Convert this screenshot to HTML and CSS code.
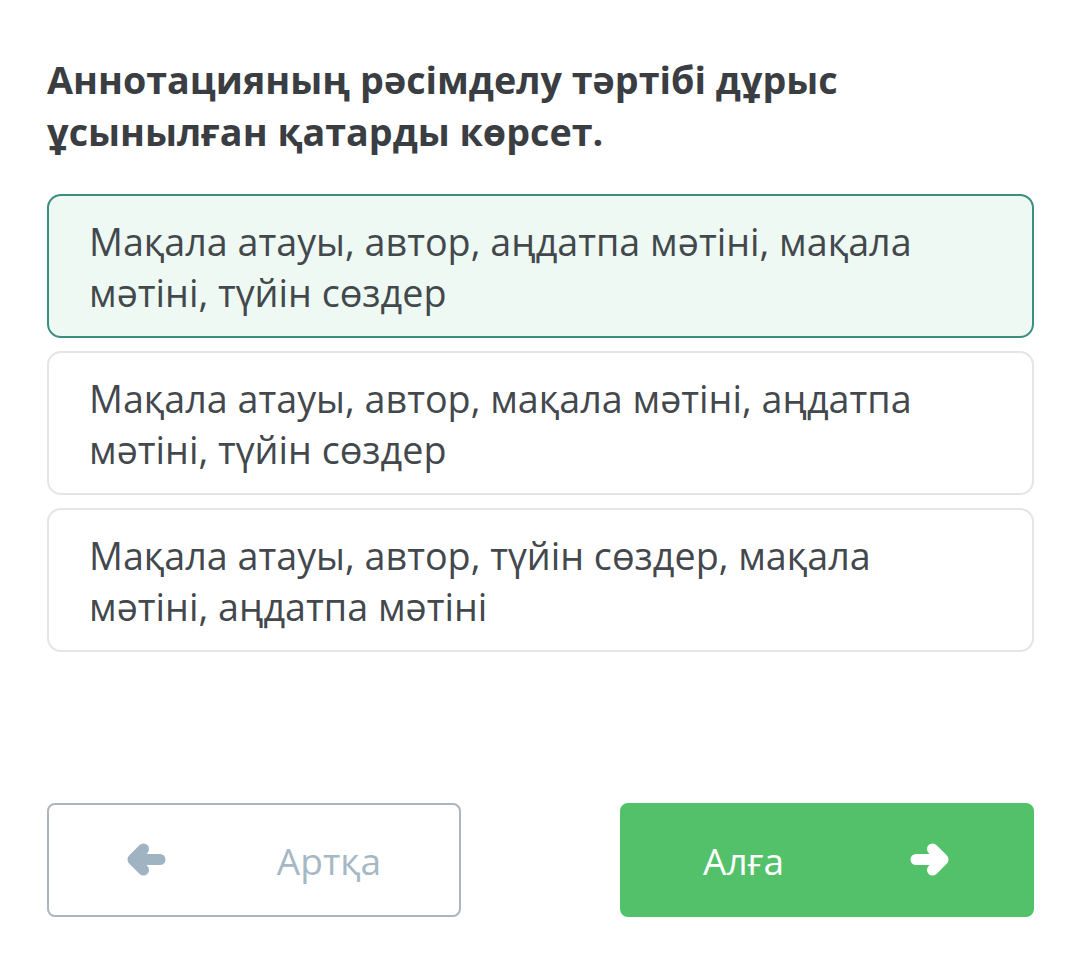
FILE: index.html
```html
<!DOCTYPE html>
<html lang="kk">
<head>
<meta charset="utf-8">
<link rel="stylesheet" href="styles.css">
</head>
<body>
<main class="quiz">
  <h1 class="question">Аннотацияның рәсімделу тәртібі дұрыс ұсынылған қатарды көрсет.</h1>
  <div class="options">
    <div class="option selected">Мақала атауы, автор, аңдатпа мәтіні, мақала мәтіні, түйін сөздер</div>
    <div class="option">Мақала атауы, автор, мақала мәтіні, аңдатпа мәтіні, түйін сөздер</div>
    <div class="option">Мақала атауы, автор, түйін сөздер, мақала мәтіні, аңдатпа мәтіні</div>
  </div>
  <div class="nav">
    <button class="btn back">
      <svg class="icon" viewBox="0 0 40 36"><path d="M34 17.5 H9 M17.5 7 L7 17.5 L17.5 28"/></svg>
      <span>Артқа</span>
    </button>
    <button class="btn next">
      <span>Алға</span>
      <svg class="icon" viewBox="0 0 40 36"><path d="M6 17.5 H31 M22.5 7 L33 17.5 L22.5 28"/></svg>
    </button>
  </div>
</main>
</body>
</html>
```

FILE: styles.css
```css
html, body {
  margin: 0;
  padding: 0;
  background: #ffffff;
}

body {
  font-family: "Open Sans", "Noto Sans", "DejaVu Sans", sans-serif;
}

.quiz {
  width: 987px;
  padding: 54px 0 0 47px;
  display: flex;
  flex-direction: column;
}

.question {
  margin: 0 0 36px 0;
  width: 880px;
  font-size: 37.7px;
  line-height: 52px;
  font-weight: 700;
  color: #3a3d42;
}

.options {
  display: flex;
  flex-direction: column;
  gap: 13px;
}

.option {
  box-sizing: border-box;
  height: 144px;
  padding: 20px 100px 0 40px;
  border: 2px solid #e3e5e6;
  border-radius: 14px;
  background: #ffffff;
  font-size: 37.7px;
  line-height: 51px;
  color: #43484d;
}

.option.selected {
  border-color: #3d8d80;
  background: #edf9f2;
}

.nav {
  margin-top: 151px;
  display: flex;
  justify-content: space-between;
}

.btn {
  box-sizing: border-box;
  width: 414px;
  height: 114px;
  display: flex;
  align-items: center;
  justify-content: space-between;
  padding: 0 78px 0 77px;
  border-radius: 8px;
  font-family: inherit;
  font-size: 37px;
  cursor: pointer;
}

.btn .icon {
  width: 40px;
  height: 36px;
  fill: none;
  stroke-width: 11;
  stroke-linecap: round;
  stroke-linejoin: round;
}

.back {
  background: #ffffff;
  border: 2px solid #aab7c1;
  color: #a6b7c5;
}

.back .icon {
  stroke: #a0b3c3;
}

.next {
  background: #52c16a;
  border: 2px solid #52c16a;
  color: #ffffff;
  padding: 0 82px 0 81px;
}

.next .icon {
  stroke: #ffffff;
}
```
